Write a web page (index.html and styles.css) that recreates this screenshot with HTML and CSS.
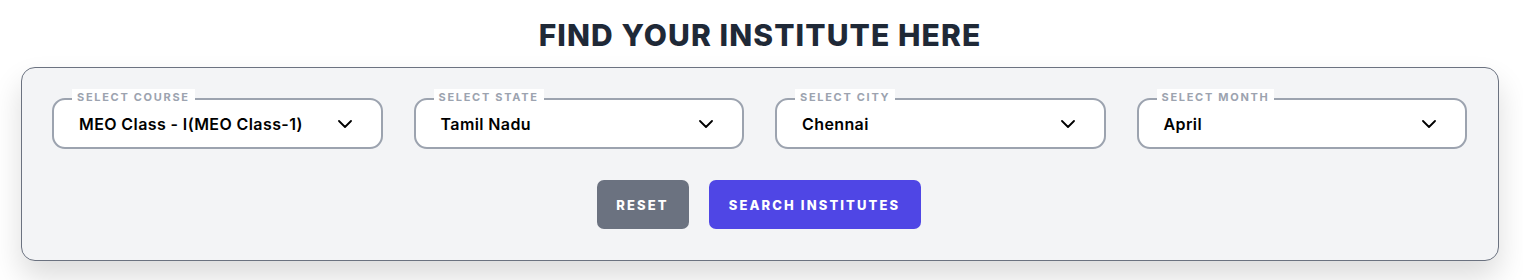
FILE: index.html
```html
<!DOCTYPE html>
<html lang="en">
<head>
  <meta charset="UTF-8" />
  <meta name="viewport" content="width=device-width, initial-scale=1.0" />
  <title>Find Your Institute</title>
  <link rel="stylesheet" href="styles.css">
</head>
<body>
  <div class="page">
    <h1>FIND YOUR INSTITUTE HERE</h1>
    <div class="panel">
      <div class="fields">
        <div class="field">
          <span class="field-label">SELECT COURSE</span>
          <div class="select">
            <span>MEO Class - I(MEO Class-1)</span>
            <svg width="14" height="8" viewBox="0 0 14 8"><path d="M1 1l6 6 6-6" fill="none" stroke="#000" stroke-width="1.8" stroke-linecap="round" stroke-linejoin="round"/></svg>
          </div>
        </div>
        <div class="field">
          <span class="field-label">SELECT STATE</span>
          <div class="select">
            <span>Tamil Nadu</span>
            <svg width="14" height="8" viewBox="0 0 14 8"><path d="M1 1l6 6 6-6" fill="none" stroke="#000" stroke-width="1.8" stroke-linecap="round" stroke-linejoin="round"/></svg>
          </div>
        </div>
        <div class="field">
          <span class="field-label">SELECT CITY</span>
          <div class="select">
            <span>Chennai</span>
            <svg width="14" height="8" viewBox="0 0 14 8"><path d="M1 1l6 6 6-6" fill="none" stroke="#000" stroke-width="1.8" stroke-linecap="round" stroke-linejoin="round"/></svg>
          </div>
        </div>
        <div class="field">
          <span class="field-label">SELECT MONTH</span>
          <div class="select">
            <span>April</span>
            <svg width="14" height="8" viewBox="0 0 14 8"><path d="M1 1l6 6 6-6" fill="none" stroke="#000" stroke-width="1.8" stroke-linecap="round" stroke-linejoin="round"/></svg>
          </div>
        </div>
      </div>
      <div class="actions">
        <button class="btn btn-reset">RESET</button>
        <button class="btn btn-search">SEARCH INSTITUTES</button>
      </div>
    </div>
  </div>
</body>
</html>
```

FILE: styles.css
```css
body {
  margin: 0;
  background: #fff;
  font-family: 'Inter', 'Open Sans', sans-serif;
}
.page {
  padding: 16px 24px 30px 21px;
}
h1 {
  margin: 0 0 13px;
  text-align: center;
  font-family: 'Inter', sans-serif;
  font-weight: 800;
  font-size: 30px;
  line-height: 38px;
  color: #1f2937;
  letter-spacing: 1.1px;
}
.panel {
  background: #f3f4f6;
  border: 1px solid #6b7280;
  border-radius: 14px;
  padding: 30px 31px 31px 30px;
  box-shadow: 0 16px 30px rgba(0,0,0,0.14);
}
.fields {
  display: grid;
  grid-template-columns: repeat(4, 1fr);
  gap: 31px;
}
.field {
  position: relative;
}
.field-label {
  position: absolute;
  top: -9px;
  left: 20px;
  background: #fff;
  padding: 0 5px;
  font-size: 11px;
  line-height: 16px;
  font-weight: 700;
  letter-spacing: 1.7px;
  color: #9ca3af;
}
.select {
  height: 51px;
  box-sizing: border-box;
  border: 2px solid #9ca3af;
  border-radius: 13px;
  background: #fff;
  display: flex;
  align-items: center;
  justify-content: space-between;
  padding: 0 29px 0 25px;
  font-size: 16px;
  font-weight: 600;
  letter-spacing: 0.4px;
  color: #000;
}
.select svg { display: block; }
.actions {
  display: flex;
  justify-content: center;
  gap: 20px;
  margin-top: 31px;
  padding-right: 2px;
}
.btn {
  height: 49px;
  border: none;
  border-radius: 7px;
  color: #fff;
  font-family: 'Inter', sans-serif;
  font-size: 13px;
  font-weight: 800;
  letter-spacing: 2.1px;
  cursor: pointer;
}
.btn-reset { background: #6b7280; width: 92px; }
.btn-search { background: #4f46e5; width: 212px; }
```
